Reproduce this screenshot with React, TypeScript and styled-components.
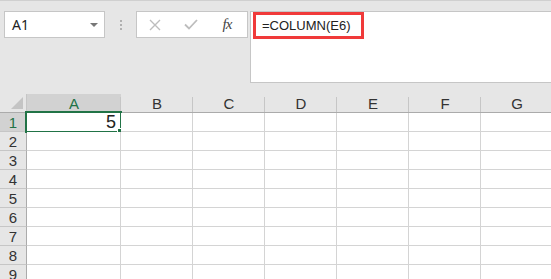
import React from 'react'
import styled, { createGlobalStyle } from 'styled-components'

const GlobalStyle = createGlobalStyle`
  html, body {
    margin: 0;
    padding: 0;
    background: #e6e6e6;
  }
  body {
    width: 551px;
    height: 279px;
    overflow: hidden;
    font-family: "Liberation Sans", Arial, sans-serif;
  }
`

const Page = styled.div`
  width: 551px;
  height: 279px;
  overflow: hidden;
  border-top: 1px solid #d0d0d0;
  box-sizing: border-box;
  background: #e6e6e6;
`

const Toolbar = styled.div`
  display: flex;
  align-items: flex-start;
  padding: 10px 0 0 4px;
  height: 82px;
  box-sizing: border-box;
`

const NameBox = styled.div`
  width: 101px;
  height: 27px;
  box-sizing: border-box;
  background: #fff;
  border: 1px solid #c6c6c6;
  display: flex;
  align-items: center;
  justify-content: space-between;
  padding: 0 6px 0 7px;
  font-family: "Noto Sans", sans-serif;
  font-size: 14px;
  color: #222;
`

const Arrow = styled.span`
  width: 0;
  height: 0;
  border-left: 4px solid transparent;
  border-right: 4px solid transparent;
  border-top: 4px solid #777;
  margin-top: 1px;
`

const Grip = styled.div`
  width: 31px;
  height: 27px;
  display: flex;
  flex-direction: column;
  align-items: center;
  justify-content: center;
  gap: 2px;
`

const Dot = styled.span`
  width: 2px;
  height: 2px;
  background: #b0b0b0;
`

const ButtonBox = styled.div`
  width: 112px;
  height: 27px;
  box-sizing: border-box;
  background: #fff;
  border: 1px solid #c6c6c6;
  display: flex;
  align-items: center;
`

const IconButton = styled.div`
  width: 36px;
  display: flex;
  align-items: center;
  justify-content: center;
`

const Fx = styled.span`
  font-family: "Liberation Serif", serif;
  font-style: italic;
  font-size: 15px;
  color: #444;
  letter-spacing: -1px;
`

const FormulaBar = styled.div`
  flex: 1;
  margin-left: 2px;
  height: 72px;
  box-sizing: border-box;
  background: #fff;
  border: 1px solid #c6c6c6;
  border-right: none;
  padding-left: 2px;
`

const Highlight = styled.div`
  width: 111px;
  height: 27px;
  box-sizing: border-box;
  border: 3px solid #f03a3a;
  display: flex;
  align-items: center;
  padding-left: 6px;
  font-family: "Liberation Sans", sans-serif;
  font-size: 13px;
  color: #222;
`

const Sheet = styled.div`
  margin-top: 11px;
`

const Row = styled.div`
  display: flex;
  height: 19px;
`

const HeaderCell = styled.div<{ $w: number; $active?: boolean }>`
  width: ${p => p.$w}px;
  flex: none;
  box-sizing: border-box;
  background: ${p => (p.$active ? '#d2d2d2' : '#e6e6e6')};
  border-bottom: 1px solid #ababab;
  position: relative;
  display: flex;
  align-items: center;
  justify-content: center;
  font-size: 15px;
  color: ${p => (p.$active ? '#217346' : '#333')};
  &::after {
    content: '';
    position: absolute;
    right: 0;
    top: 3px;
    bottom: 0;
    width: 1px;
    background: #c6c6c6;
  }
`

const Corner = styled.div`
  width: 27px;
  flex: none;
  box-sizing: border-box;
  background: #e6e6e6;
  border-bottom: 1px solid #ababab;
  border-right: 1px solid #c6c6c6;
  display: flex;
  align-items: flex-end;
  justify-content: flex-end;
  padding: 0 3px 3px 0;
`

const Triangle = styled.span`
  width: 0;
  height: 0;
  border-left: 12px solid transparent;
  border-bottom: 12px solid #c4c4c4;
`

const RowHead = styled.div<{ $active?: boolean }>`
  width: 27px;
  flex: none;
  box-sizing: border-box;
  background: ${p => (p.$active ? '#d2d2d2' : '#e6e6e6')};
  border-right: 1px solid #ababab;
  border-bottom: 1px solid #c6c6c6;
  display: flex;
  align-items: center;
  justify-content: center;
  font-size: 15px;
  color: ${p => (p.$active ? '#217346' : '#333')};
`

const Cell = styled.div<{ $w: number }>`
  width: ${p => p.$w}px;
  flex: none;
  box-sizing: border-box;
  background: #fff;
  border-right: 1px solid #d4d4d4;
  border-bottom: 1px solid #d4d4d4;
  position: relative;
  display: flex;
  align-items: center;
  justify-content: flex-end;
  padding-right: 4px;
  font-size: 18px;
  color: #222;
`

const Selection = styled.div`
  position: absolute;
  left: -2px;
  top: -2px;
  right: -2px;
  bottom: -2px;
  border: 2px solid #217346;
  pointer-events: none;
`

const Handle = styled.div`
  position: absolute;
  right: -4px;
  bottom: -4px;
  width: 5px;
  height: 5px;
  background: #217346;
  border: 1px solid #fff;
`

const columns = [
  { name: 'A', w: 94 },
  { name: 'B', w: 72 },
  { name: 'C', w: 72 },
  { name: 'D', w: 72 },
  { name: 'E', w: 72 },
  { name: 'F', w: 72 },
  { name: 'G', w: 72 },
]

const rows = [1, 2, 3, 4, 5, 6, 7, 8, 9]

const App = () => {
  return (
    <Page>
      <GlobalStyle />
      <Toolbar>
        <NameBox>
          A1
          <Arrow />
        </NameBox>
        <Grip>
          <Dot />
          <Dot />
          <Dot />
        </Grip>
        <ButtonBox>
          <IconButton>
            <svg width="12" height="12" viewBox="0 0 12 12">
              <path d="M1 1 L11 11 M11 1 L1 11" stroke="#bdbdbd" strokeWidth="1.4" fill="none" />
            </svg>
          </IconButton>
          <IconButton>
            <svg width="14" height="11" viewBox="0 0 14 11">
              <path d="M1 5.5 L5 9.5 L13 1" stroke="#bdbdbd" strokeWidth="1.8" fill="none" />
            </svg>
          </IconButton>
          <IconButton>
            <Fx>fx</Fx>
          </IconButton>
        </ButtonBox>
        <FormulaBar>
          <Highlight>=COLUMN(E6)</Highlight>
        </FormulaBar>
      </Toolbar>
      <Sheet>
        <Row>
          <Corner>
            <Triangle />
          </Corner>
          {columns.map(c => (
            <HeaderCell key={c.name} $w={c.w} $active={c.name === 'A'}>
              {c.name}
            </HeaderCell>
          ))}
        </Row>
        {rows.map(r => (
          <Row key={r}>
            <RowHead $active={r === 1}>{r}</RowHead>
            {columns.map(c => (
              <Cell key={c.name} $w={c.w}>
                {r === 1 && c.name === 'A' && (
                  <>
                    5
                    <Selection>
                      <Handle />
                    </Selection>
                  </>
                )}
              </Cell>
            ))}
          </Row>
        ))}
      </Sheet>
    </Page>
  )
}

export default App
